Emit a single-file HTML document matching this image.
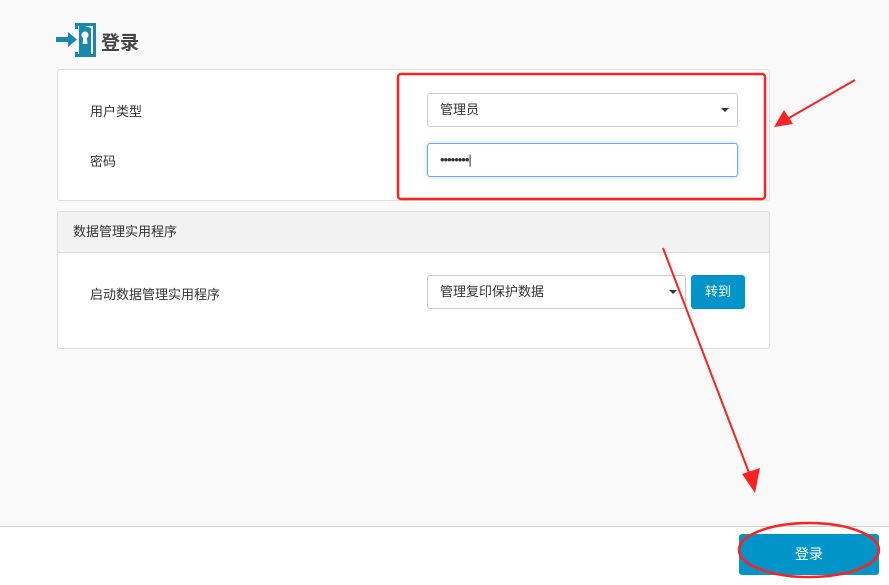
<!DOCTYPE html>
<html><head><meta charset="utf-8"><style>
body{margin:0;width:889px;height:584px;background:#f9f9f9;font-family:"Liberation Sans","Noto Sans CJK SC",sans-serif;font-size:13px;color:#333;position:relative;overflow:hidden}
.abs{position:absolute}
.panel{position:absolute;left:57px;width:713px;background:#fff;border:1px solid #ddd;border-radius:3px;box-sizing:border-box}
.inp{position:absolute;background:#fff;border:1px solid #ccc;border-radius:3px;box-sizing:border-box;padding-left:12px;line-height:32px;font-size:13px}
.caret{position:absolute;width:0;height:0;border-left:4px solid transparent;border-right:4px solid transparent;border-top:4px solid #333}
</style></head><body>
<svg class="abs" style="left:56px;top:21px" width="42" height="38" viewBox="0 0 42 38">
<rect x="0" y="16" width="15" height="5" fill="#1a87ad"/>
<polygon points="12,11 21,18.5 12,26" fill="#1a87ad"/>
<path d="M19 2 H40 V36 H19 V31 H22 V33 H37 V5 H22 V8 H19 Z" fill="#1a87ad"/>
<polygon points="23,3 35,7 35,33 23,35" fill="#1a87ad"/>
<circle cx="29" cy="14" r="3.5" fill="#fff"/>
<polygon points="27.5,15 30.5,15 31.5,23 26.5,23" fill="#fff"/>
</svg>
<div class="abs" style="left:101px;top:28px;font-size:19px;font-weight:bold;color:#444">登录</div>

<div class="panel" style="top:69px;height:132px"></div>
<div class="abs" style="left:90px;top:101px">用户类型</div>
<div class="abs" style="left:90px;top:151px">密码</div>
<div class="inp" style="left:427px;top:93px;width:311px;height:34px">管理员</div>
<div class="caret" style="left:721px;top:108px"></div>
<div class="inp" style="left:427px;top:143px;width:311px;height:34px;border-color:#66afe9;box-shadow:0 0 5px rgba(102,175,233,.5);letter-spacing:-1px">••••••••|</div>

<div class="panel" style="top:211px;height:138px;overflow:hidden">
<div style="background:#f2f2f2;border-bottom:1px solid #ddd;height:40px;line-height:40px;padding-left:15px">数据管理实用程序</div>
</div>
<div class="abs" style="left:90px;top:284px">启动数据管理实用程序</div>
<div class="inp" style="left:427px;top:275px;width:259px;height:34px">管理复印保护数据</div>
<div class="caret" style="left:669px;top:290px"></div>
<div class="abs" style="left:691px;top:275px;width:54px;height:34px;background:#0094c8;border-radius:3px;color:#fff;text-align:center;line-height:34px">转到</div>

<div class="abs" style="left:0;top:526px;width:889px;height:58px;background:#fff;border-top:1px solid #ccc"></div>
<div class="abs" style="left:739px;top:534px;width:140px;height:41px;background:#0094c8;border-radius:3px;color:#fff;text-align:center;line-height:41px;font-size:14px">登录</div>

<svg class="abs" style="left:0;top:0" width="889" height="584">
<rect x="398" y="74" width="367" height="125" rx="3" fill="none" stroke="#f22" stroke-width="2.5"/>
<line x1="855" y1="80" x2="782" y2="122" stroke="#f22" stroke-width="2"/>
<polygon points="774,127 784,110 793,124" fill="#f22"/>
<line x1="663" y1="248" x2="751" y2="478" stroke="#f22" stroke-width="2"/>
<polygon points="755,493 742,474 760,468" fill="#f22"/>
<ellipse cx="809" cy="550" rx="70" ry="27" fill="none" stroke="#f22" stroke-width="2.5"/>
</svg>
</body></html>
